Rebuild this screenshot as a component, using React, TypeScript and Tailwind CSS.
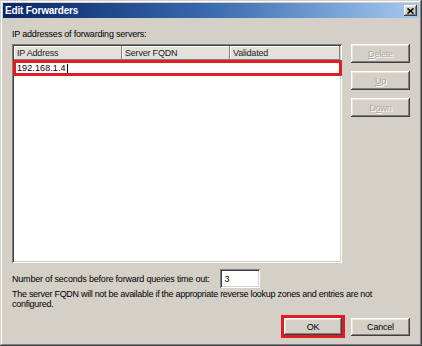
import React from 'react';

const raised =
  'shadow-[inset_-1px_-1px_#404040,inset_1px_1px_#ffffff,inset_-2px_-2px_#808080,inset_2px_2px_#e8e6e1]';
const sunken =
  'shadow-[inset_1px_1px_#808080,inset_-1px_-1px_#ffffff,inset_2px_2px_#404040,inset_-2px_-2px_#d4d0c8]';

const SideButton = ({ children }: { children: React.ReactNode }) => (
  <div
    className={`h-[19px] w-[59px] flex items-center justify-center bg-[#d4d0c8] text-[#a8a6a1] [text-shadow:1px_1px_0_#ffffff] ${raised}`}
  >
    {children}
  </div>
);

const HeaderCell = ({ label, width }: { label: string; width: string }) => (
  <div
    className={`${width} h-full flex items-center pl-[3px] bg-[#e4e1db] shadow-[inset_-1px_-1px_#808080,inset_1px_1px_#ffffff]`}
  >
    {label}
  </div>
);

export default function App() {
  return (
    <div
      className={`w-[422px] h-[346px] p-[3px] bg-[#d4d0c8] flex flex-col font-['Liberation_Sans',Arial,sans-serif] text-[9px] leading-[10px] tracking-[-0.2px] text-black shadow-[inset_-1px_-1px_#404040,inset_1px_1px_#d4d0c8,inset_-2px_-2px_#808080,inset_2px_2px_#ffffff]`}
    >
      {/* title bar */}
      <div className="h-[15px] flex items-center justify-between pl-[2px] pr-[2px] bg-gradient-to-r from-[#0a246a] via-[#3a6ab0] to-[#a6caf0]">
        <span className="text-white font-bold text-[10px] tracking-[-0.2px]">
          Edit Forwarders
        </span>
        <div
          className={`w-[13px] h-[11px] flex items-center justify-center bg-[#d4d0c8] ${raised}`}
        >
          <svg width="7" height="6" viewBox="0 0 7 6">
            <path d="M0.5 0.5 L6.5 5.5 M6.5 0.5 L0.5 5.5" stroke="#000" strokeWidth="1.6" />
          </svg>
        </div>
      </div>

      <div className="flex-1 flex flex-col px-[9px]">
        <div className="mt-[10px] h-[11px] flex items-center">
          IP addresses of forwarding servers:
        </div>

        <div className="mt-[5px] flex gap-[9px]">
          {/* list box */}
          <div className={`w-[330px] h-[219px] bg-white p-[2px] flex flex-col ${sunken}`}>
            <div className="h-[14px] flex text-[#222]">
              <HeaderCell label="IP Address" width="w-[108px]" />
              <HeaderCell label="Server FQDN" width="w-[108px]" />
              <HeaderCell label="Validated" width="w-[110px]" />
            </div>
            <div className="h-[16px] -mx-[1px] -mr-[2px] border-[3px] border-[#e01b24] flex items-center pl-[1px]">
              <span className="tracking-[0.1px]">192.168.1.4</span>
              <span className="ml-[1px] w-px h-[9px] bg-black" />
            </div>
          </div>

          {/* side buttons */}
          <div className="flex flex-col gap-[8px]">
            <SideButton>
              <span className="underline">D</span>elete
            </SideButton>
            <SideButton>
              <span className="underline">U</span>p
            </SideButton>
            <SideButton>
              D<span className="underline">o</span>wn
            </SideButton>
          </div>
        </div>

        <div className="mt-[6px] flex items-center">
          <span>Number of seconds before forward queries time out:</span>
          <div className={`ml-[10px] w-[40px] h-[19px] bg-white flex items-center pl-[5px] ${sunken}`}>
            3
          </div>
        </div>

        <div className="mt-[1px] w-[370px] tracking-[-0.28px]">
          The server FQDN will not be available if the appropriate reverse lookup zones and entries are not configured.
        </div>

        <div className="mt-[6px] flex justify-end items-center gap-[6px]">
          <div className="border-[3px] border-[#e01b24]">
            <div className={`h-[17px] w-[58px] flex items-center justify-center bg-[#d4d0c8] ${raised}`}>
              OK
            </div>
          </div>
          <div className={`h-[18px] w-[59px] flex items-center justify-center bg-[#d4d0c8] ${raised}`}>
            Cancel
          </div>
        </div>
      </div>
    </div>
  );
}
